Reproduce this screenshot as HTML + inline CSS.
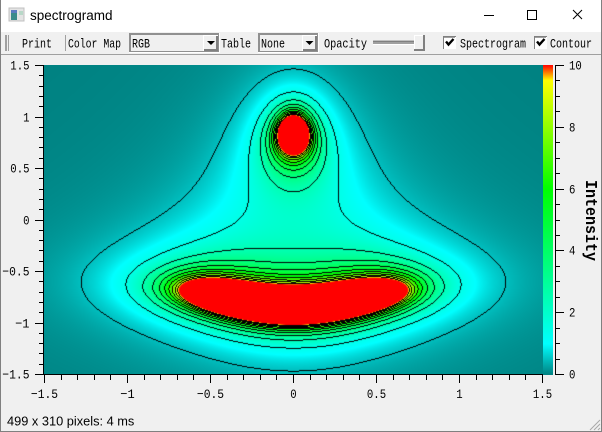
<!DOCTYPE html>
<html><head><meta charset="utf-8">
<style>
html,body{margin:0;padding:0;background:#f0f0f0}
#w{position:relative;width:602px;height:432px;overflow:hidden;background:#f0f0f0}
svg{position:absolute;left:0;top:0}
canvas{position:absolute;background:#00b0b0}
.m{font-family:"Liberation Mono",monospace;fill:#000}
.s{font-family:"Liberation Sans",sans-serif;fill:#000}
</style></head><body>
<div id="w">
<canvas id="c" width="499" height="310" style="left:44px;top:65px"></canvas>
<canvas id="b" width="10" height="310" style="left:543px;top:65px"></canvas>
<svg id="o" width="602" height="432" viewBox="0 0 602 432" xmlns="http://www.w3.org/2000/svg">
<rect x="0" y="0" width="602" height="32" fill="#fff"/>
<rect x="0" y="54" width="602" height="1" fill="#a0a0a0"/>
<g shape-rendering="crispEdges">
<rect x="9" y="8" width="15" height="13" fill="#e4e4e4" stroke="#c0c0c0"/>
<rect x="11" y="10" width="6" height="10" fill="#3a8a8a"/>
<rect x="11" y="10" width="6" height="3" fill="#5a7ac0"/>
<rect x="19" y="11" width="4" height="4" fill="#b8d8c8"/>
<rect x="484" y="15" width="10" height="1" fill="#000"/>
<rect x="527.500" y="10.500" width="9" height="9" fill="none" stroke="#000"/>
</g>
<path d="M573 10L582 19M582 10L573 19" stroke="#000" fill="none"/>
<text class="s" x="30" y="20" font-size="13.500">spectrogramd</text>
<g shape-rendering="crispEdges">
<rect x="5" y="35" width="2" height="16" fill="#a0a0a0"/>
<rect x="8" y="35" width="1" height="16" fill="#a0a0a0"/>
<rect x="65" y="35" width="1" height="16" fill="#a0a0a0"/>
<rect x="129" y="33" width="91" height="20" fill="#fff"/>
<rect x="129" y="33" width="90" height="19" fill="#909090"/>
<rect x="131" y="35" width="87" height="16" fill="#f0f0f0"/>
<rect x="203" y="35" width="15" height="1" fill="#fff"/>
<rect x="203" y="35" width="1" height="16" fill="#fff"/>
<rect x="204" y="49" width="14" height="2" fill="#808080"/>
<rect x="216" y="36" width="2" height="15" fill="#808080"/>
<rect x="258" y="33" width="61" height="20" fill="#fff"/>
<rect x="258" y="33" width="60" height="19" fill="#909090"/>
<rect x="260" y="35" width="57" height="16" fill="#f0f0f0"/>
<rect x="302" y="35" width="15" height="1" fill="#fff"/>
<rect x="302" y="35" width="1" height="16" fill="#fff"/>
<rect x="303" y="49" width="14" height="2" fill="#808080"/>
<rect x="315" y="36" width="2" height="15" fill="#808080"/>
<rect x="373" y="40" width="41" height="1" fill="#c0c0c0"/>
<rect x="373" y="41" width="41" height="1" fill="#808080"/>
<rect x="373" y="42" width="41" height="2" fill="#a0a0a0"/>
<rect x="373" y="44" width="41" height="1" fill="#fff"/>
<rect x="414" y="35" width="11" height="16" fill="#f0f0f0"/>
<rect x="414" y="35" width="10" height="1" fill="#fff"/>
<rect x="414" y="35" width="1" height="15" fill="#fff"/>
<rect x="414" y="49" width="11" height="2" fill="#808080"/>
<rect x="423" y="35" width="2" height="16" fill="#808080"/>
<rect x="443" y="36" width="13" height="13" fill="#fff"/>
<rect x="443" y="36" width="13" height="1" fill="#808080"/>
<rect x="443" y="36" width="1" height="13" fill="#808080"/>
<rect x="444" y="37" width="11" height="1" fill="#a0a0a0"/>
<rect x="534" y="36" width="13" height="13" fill="#fff"/>
<rect x="534" y="36" width="13" height="1" fill="#808080"/>
<rect x="534" y="36" width="1" height="13" fill="#808080"/>
<rect x="535" y="37" width="11" height="1" fill="#a0a0a0"/>
</g>
<path d="M207 41h8l-4 4z" fill="#000"/>
<path d="M305.500 41h8l-4 4z" fill="#000"/>
<path d="M446 41.500l2.500 3 5-5.500" stroke="#000" stroke-width="2.400" fill="none"/>
<path d="M537 41.500l2.500 3 5-5.500" stroke="#000" stroke-width="2.400" fill="none"/>
<g class="m" font-size="13">
<text class="m" x="22" y="47.500" textLength="30" lengthAdjust="spacingAndGlyphs">Print</text>
<text class="m" x="68" y="47.500" textLength="53" lengthAdjust="spacingAndGlyphs">Color Map</text>
<text class="m" x="132" y="47.500" textLength="18" lengthAdjust="spacingAndGlyphs">RGB</text>
<text class="m" x="221" y="47.500" textLength="30" lengthAdjust="spacingAndGlyphs">Table</text>
<text class="m" x="261" y="47.500" textLength="24" lengthAdjust="spacingAndGlyphs">None</text>
<text class="m" x="324" y="47.500" textLength="43" lengthAdjust="spacingAndGlyphs">Opacity</text>
<text class="m" x="460" y="47.500" textLength="66" lengthAdjust="spacingAndGlyphs">Spectrogram</text>
<text class="m" x="550" y="47.500" textLength="42" lengthAdjust="spacingAndGlyphs">Contour</text>
</g>
<g id="ax" shape-rendering="crispEdges" fill="#000"></g>
<g id="lb"></g>
<text class="m" font-weight="bold" font-size="17" transform="translate(586,220.500) rotate(90)" text-anchor="middle" textLength="81" lengthAdjust="spacingAndGlyphs">Intensity</text>
<text class="s" x="7" y="425.500" font-size="12.800">499 x 310 pixels: 4 ms</text>
<path d="M590 430L600 420M594 430L600 424M598 430L600 428" stroke="#a8a8a8" fill="none"/>
<rect x="0" y="0" width="1" height="432" fill="#808080"/>
<rect x="601" y="0" width="1" height="432" fill="#808080"/>
<rect x="0" y="431" width="602" height="1" fill="#808080"/>
</svg>
</div>
<script>
function col(t){
 var s=[[0,0,128,128],[.1,0,255,255],[.6,0,255,0],[.95,255,255,0],[1,255,0,0]];
 if(t<=0)return [0,128,128]; if(t>=1)return [255,0,0];
 for(var i=1;i<s.length;i++)if(t<=s[i][0]){var a=s[i-1],b=s[i],f=(t-a[0])/(b[0]-a[0]);
  return [a[1]+(b[1]-a[1])*f,a[2]+(b[2]-a[2])*f,a[3]+(b[3]-a[3])*f];}
}
function val(x,y){var c=.842,v1=x*x+(y-c)*(y+c),v2=2*x*(y+c);return 1/(v1*v1+v2*v2);}
var W=499,H=310,cv=document.getElementById('c'),g=cv.getContext('2d'),im=g.createImageData(W,H),d=im.data;
var L=new Int32Array(W*H),V=new Float64Array(W*H);
for(var j=0;j<H;j++)for(var i=0;i<W;i++){
 var v=val(-1.5+(i+.5)*3/W,1.5-(j+.5)*3/H);V[j*W+i]=v;
 L[j*W+i]=v>=9.5?10:Math.floor(v+.5);
}
for(j=0;j<H;j++)for(i=0;i<W;i++){
 var k=j*W+i,c=col(V[k]/10),p=k*4,e=false,l=L[k];
 if(i<W-1&&l<L[k+1])e=true;
 if(i>0&&l<L[k-1])e=true;
 if(j<H-1&&l<L[k+W])e=true;
 if(j>0&&l<L[k-W])e=true;
 if(e)c=[0,0,0];
 d[p]=c[0];d[p+1]=c[1];d[p+2]=c[2];d[p+3]=255;
}
g.putImageData(im,0,0);
var b=document.getElementById('b').getContext('2d');
for(j=0;j<H;j++){var q=col(1-(j+.5)/H);b.fillStyle='rgb('+Math.round(q[0])+','+Math.round(q[1])+','+Math.round(q[2])+')';b.fillRect(0,j,10,1);}
var NS='http://www.w3.org/2000/svg',ax=document.getElementById('ax'),lb=document.getElementById('lb');
function R(x,y,w,h){var r=document.createElementNS(NS,'rect');r.setAttribute('x',x);r.setAttribute('y',y);r.setAttribute('width',w);r.setAttribute('height',h);ax.appendChild(r);}
function T(s,x,y,a){var t=document.createElementNS(NS,'text');t.setAttribute('class','m');t.setAttribute('x',x);t.setAttribute('y',y);t.setAttribute('font-size','13');t.setAttribute('text-anchor',a);t.setAttribute('textLength',s.replace('-','').length*6.4+(s[0]=='-'?8:0));t.setAttribute('lengthAdjust','spacingAndGlyphs');t.textContent=s.replace('-','\u2212');lb.appendChild(t);}
R(43,65,1,310);R(44,374,499,1);R(555,65,1,310);
function lab(n){return n==0?'0':String(n);}
for(var n=0;n<=30;n++){
 var v=-1.5+n*.1,y=Math.round(374-n*309/30),x=Math.round(44+n*498/30),maj=n%5==0;
 R(maj?35:39,y,maj?8:4,1);
 R(x,375,1,maj?8:5);
 if(maj){var s=lab(Math.round(v*10)/10);T(s,29.500,y+4.500,'end');T(s,x+.5,398,'middle');}
}
for(n=0;n<=20;n++){
 var y2=Math.round(374-n*309/20),mj=n%4==0;
 R(556,y2,mj?8:4,1);
 if(mj)T(String(n/2),569,y2+4.500,'start');
}
</script>
</body></html>
